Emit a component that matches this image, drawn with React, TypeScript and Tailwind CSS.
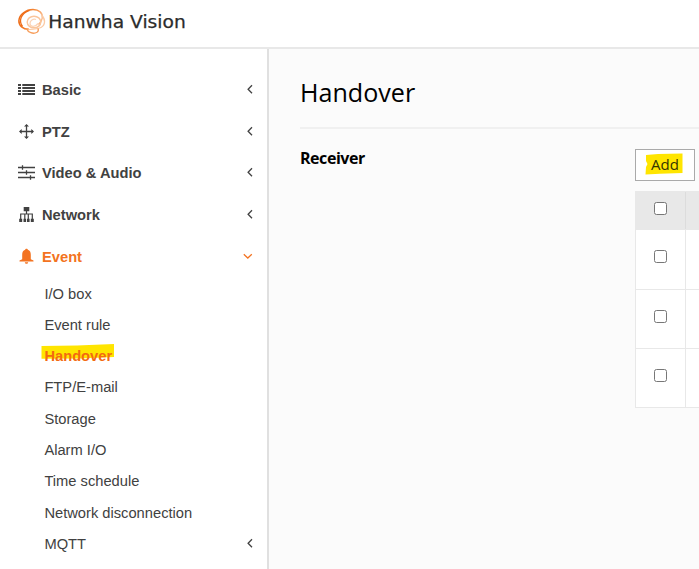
import React from "react";

const Logo = () => (
  <svg width="190" height="34" viewBox="0 0 190 34" className="mt-1 block" aria-label="Hanwha Vision">
    <defs>
      <linearGradient id="ring" x1="0" y1="0.4" x2="1" y2="0.6">
        <stop offset="0" stopColor="#ed6a14" />
        <stop offset="0.6" stopColor="#f58b3d" />
        <stop offset="1" stopColor="#fbc297" />
      </linearGradient>
    </defs>
    <g fill="none">
      <path d="M29 25.300C23 25.500 18.600 21.500 18.900 16.500C19.300 10.500 26 5.600 33 5.600C39 5.600 43 9 42.300 14C41.900 16.500 40.500 18.800 38.500 20.500" stroke="url(#ring)" strokeWidth="1.500" />
      <path d="M22.500 22.500C18.500 17 20.500 9.500 29.500 6.300" stroke="#ef6b16" strokeWidth="1.300" />
      <ellipse cx="34" cy="18" rx="6.800" ry="5.800" stroke="#fac59b" strokeWidth="1.400" />
      <path d="M38 19.500C35 23.500 30 23 30 19.500C30 16.500 33 14.500 36 15.500" stroke="#fbd5b8" strokeWidth="1.300" />
      <path d="M41.500 11C45.800 15 45.500 21 41 23.500C37 25.700 31 24.500 27.500 26" stroke="#fbcba6" strokeWidth="1.300" />
      <path d="M26.500 24.500C28 28.500 33 30.500 37 28.300C38.500 27.300 38.500 25.700 38 24.500" stroke="#f79d5a" strokeWidth="1.300" />
    </g>
    <text x="48.300" y="23.500" fontSize="16.800" fontFamily="DejaVu Sans, sans-serif" fill="#2c2c2c" stroke="#2c2c2c" strokeWidth="0.250" textLength="137.500" lengthAdjust="spacingAndGlyphs">Hanwha Vision</text>
  </svg>
);

const Icon = ({ name }: { name: string }) => (
  <svg width="18" height="18" viewBox="0 0 18 18" className="shrink-0" fill="currentColor" stroke="none">
    {name === "Basic" && (
      <path d="M0 4h3v2H0zM4.300 4H17v2H4.300zM0 7h3v2H0zM4.300 7H17v2H4.300zM0 10h3v2H0zM4.300 10H17v2H4.300zM0 13h3v2H0zM4.300 13H17v2H4.300z" />
    )}
    {name === "PTZ" && (
      <>
        <path d="M8.500 3v13M2 9.500h13" stroke="currentColor" strokeWidth="1.300" />
        <path d="M8.500 1.900l2.500 2.700H6zM8.500 17.100l2.500-2.700H6zM1 9.500l2.700-2.500v5zM16 9.500l-2.700-2.500v5z" />
      </>
    )}
    {name === "Video & Audio" && (
      <path d="M0 4.500h17M4.500 2.300v4.400M0 9.500h17M8.500 7.300v4.400M0 14.500h17M12.500 12.300v4.400" stroke="currentColor" strokeWidth="1.300" />
    )}
    {name === "Network" && (
      <>
        <path d="M5.700 2h5.600v4.200H5.700zM1.200 13.800h3V17h-3zM5.500 13.800h2.600V17H5.500zM9 13.800h2.600V17H9zM12.800 13.800h3V17h-3z" />
        <path d="M8.500 5v4M2.700 14V9h11.600v5M6.800 14V9M10.300 14V9" fill="none" stroke="currentColor" strokeWidth="1.200" />
      </>
    )}
    {name === "Event" && (
      <path d="M8.500 1.800c.8 0 1.200.4 1.300.9C12 3.300 12.800 5.300 12.800 7.700v4.500l2.700 1.300v.9h-14v-.9l2.700-1.300V7.700c0-2.400.8-4.400 3-5 .1-.5.500-.9 1.300-.9zM6.800 15.300h3.400c-.2 1-.8 1.500-1.700 1.500s-1.500-.5-1.700-1.500z" />
    )}
  </svg>
);

const Chevron = ({ open = false }: { open?: boolean }) => (
  <svg width="12" height="12" viewBox="0 0 12 12" className="ml-auto shrink-0" fill="none" stroke="currentColor" strokeWidth="1.300">
    {open ? <path d="M.8 4.300l4 3.700 4-3.700" /> : <path d="M9 2.300L5.100 6.300l3.900 4" />}
  </svg>
);

const menu = ["Basic", "PTZ", "Video & Audio", "Network", "Event"];
const submenu = ["I/O box", "Event rule", "Handover", "FTP/E-mail", "Storage", "Alarm I/O", "Time schedule", "Network disconnection", "MQTT"];

const Check = () => <span className="block h-[13px] w-[13px] rounded-[2.500px] border border-[#777777] bg-white" />;

export default function App() {
  return (
    <div className="flex h-[569px] w-[699px] flex-col overflow-hidden bg-white font-['Liberation_Sans',Arial,sans-serif] text-[14.700px] text-[#414141]">
      <header className="h-[49px] shrink-0 border-b-2 border-[#e8e8e8]">
        <Logo />
      </header>
      <div className="flex min-h-0 flex-1">
        <nav className="w-[269px] shrink-0 border-r-2 border-[#e0e0e0] pt-[19px]">
          {menu.map((m) => (
            <div key={m} className={`flex h-[41.700px] items-center pr-[12px] pl-[18px] font-bold ${m === "Event" ? "text-[#f37321]" : ""}`}>
              <Icon name={m} />
              <span className="ml-1.5 pt-[2px]">{m}</span>
              <Chevron open={m === "Event"} />
            </div>
          ))}
          <div className="pt-px">
            {submenu.map((s) => (
              <div key={s} className="flex h-[31.300px] items-center pr-[12px] pl-[44.400px]">
                {s === "Handover" ? (
                  <span className="relative isolate pt-px font-bold text-[#f36a10]">
                    <svg className="absolute -top-px -left-[3px] -z-10" width="74" height="18" viewBox="0 0 74 18">
                      <path d="M.5 3L36 2.500L73 1V14L38 15.500L.5 15.800Z" fill="#ffe500" />
                    </svg>
                    {s}
                  </span>
                ) : (
                  <span className="pt-px">{s}</span>
                )}
                {s === "MQTT" && <Chevron />}
              </div>
            ))}
          </div>
        </nav>
        <main className="min-w-0 flex-1 overflow-hidden bg-[#fbfbfb] pl-[31px] font-['Open_Sans',sans-serif] text-black">
          <h1 className="flex h-[80px] items-center border-b-2 border-[#f0f0f0] pt-[10px] text-[25.100px]">Handover</h1>
          <div className="flex pt-5">
            <h2 className="mt-[-3px] w-[335px] shrink-0 text-[16px] leading-6 font-bold tracking-[-0.450px]">Receiver</h2>
            <div className="shrink-0">
              <button className="relative isolate flex h-[32px] w-[60px] items-center justify-center border border-[#aaaaaa] bg-white pb-[2px] text-[15px] text-[#353500]">
                <svg className="absolute top-[3px] left-[9px] -z-10" width="40" height="23" viewBox="0 0 40 23">
                  <path d="M1 2L13 1L37.500 .5V20L15 20.800L.5 21.500L1 14L2.500 11L1 8Z" fill="#ffe500" />
                </svg>
                Add
              </button>
              <div className="mt-[10px] w-[100px] border-l border-[#e8e8e8]">
                {["h-[39px] bg-[#e8e8e8] pb-[4px] border-t", "h-[60px] bg-white pb-[6px]", "h-[59px] bg-white pb-[6px]", "h-[59px] bg-white pb-[5px]"].map((c, i) => (
                  <div key={i} className={`flex items-stretch border-b border-[#e8e8e8] ${c}`}>
                    <div className="flex w-[49px] items-center justify-center">
                      <Check />
                    </div>
                    <div className={i === 0 ? "-mb-[4px] border-l border-[#dcdcdc]" : "-mb-[6px] border-l border-[#e8e8e8]"} />
                  </div>
                ))}
              </div>
            </div>
          </div>
        </main>
      </div>
    </div>
  );
}
